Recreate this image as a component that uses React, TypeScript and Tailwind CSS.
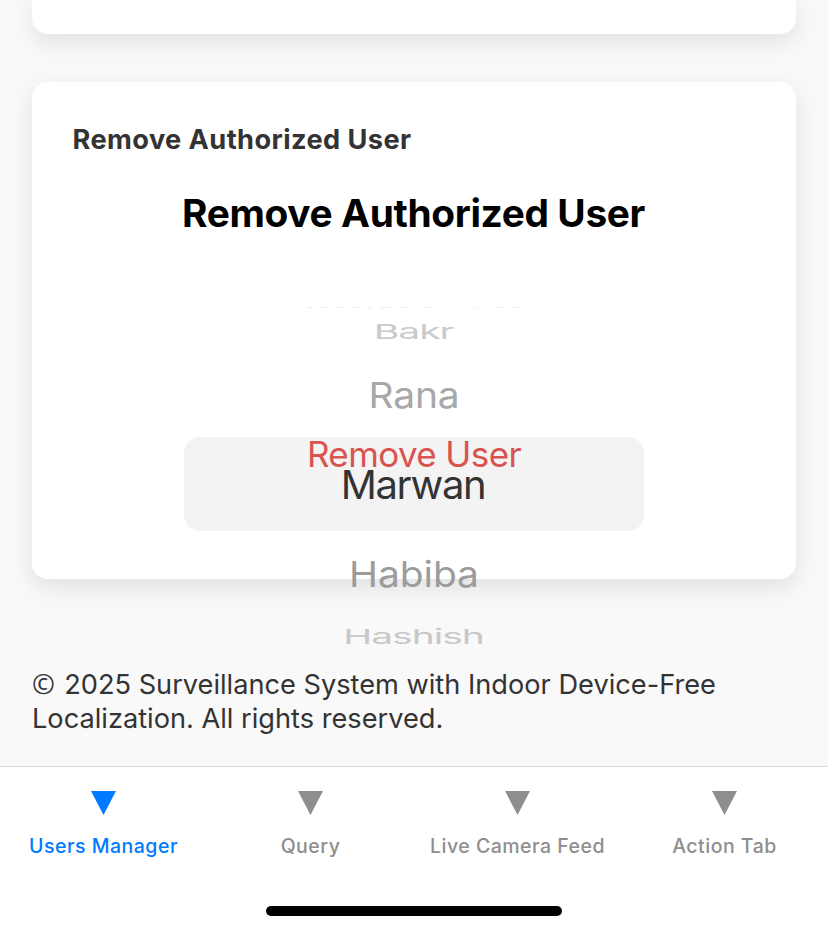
import React from "react";

type Row = { text: string; className: string };

const rows: Row[] = [
  { text: "Bakr", className: "top-[302px] text-[39px] text-[#cacaca] tracking-[-1px] scale-y-[0.53] pr-px" },
  { text: "Rana", className: "top-[365px] text-[39px] text-[#a8a8a8] tracking-[-0.2px] scale-y-[0.91]" },
  { text: "Marwan", className: "top-[455px] text-[40px] text-[#333] tracking-[-1.4px] pr-[2px]" },
  { text: "Habiba", className: "top-[544px] text-[39px] text-[#9c9c9c] tracking-[-0.1px] scale-y-[0.91]" },
  { text: "Hashish", className: "top-[607px] text-[39px] text-[#c8c8c8] tracking-[-1px] scale-y-[0.53] pr-px" },
];

const tabs = [
  { label: "Users Manager", active: true },
  { label: "Query", active: false },
  { label: "Live Camera Feed", active: false },
  { label: "Action Tab", active: false },
];

export default function App() {
  return (
    <div className="relative flex h-[932px] w-[828px] flex-col overflow-hidden bg-[#f9f9f9] font-['Inter',sans-serif]">
      <div className="mx-8 h-[34px] shrink-0 rounded-b-2xl bg-white shadow-[0_8px_24px_rgba(0,0,0,0.1)]" />
      <section className="mx-8 mt-12 h-[497px] shrink-0 rounded-2xl bg-white px-10 pt-[39px] shadow-[0_8px_24px_rgba(0,0,0,0.1)]">
        <h2 className="whitespace-nowrap pl-[0.5px] text-[27.2px] font-bold leading-[38px] tracking-[0.42px] text-[#333]">Remove Authorized User</h2>
        <h1 className="mt-[29px] whitespace-nowrap pr-px text-center text-[38.8px] font-bold leading-[50px] tracking-[-0.35px] text-black">Remove Authorized User</h1>
        <div className="mx-auto mt-[199px] h-[94px] w-[460px] rounded-2xl bg-[#f3f3f3]" />
      </section>
      {/* Sliver of the wheel row that has almost rotated out of view */}
      <svg className="absolute left-[300px] top-[306px]" width="228" height="3" viewBox="0 0 228 3" fill="none" stroke="#efefef" strokeWidth="1.2">
        <path d="M7 1.5h7M21 1.5h6M36 1.5h9M51 1.5h7M67 1.5h4M81 1.5h9M101 1.5h8M125 1.5h7M175 1.5h4M196 1.5h8M212 1.5h9" />
      </svg>
      {rows.map((r) => (
        <div key={r.text} className={`absolute left-0 w-full text-center leading-[60px] ${r.className}`}>{r.text}</div>
      ))}
      <div className="absolute left-0 top-[434px] w-full text-center text-[35px] leading-[40px] tracking-[-0.6px] text-[#d9534f]">Remove User</div>
      <footer className="mx-8 mt-[89px] h-[98px] text-[27.2px] leading-[34px] text-[#333]">
        <p className="whitespace-nowrap">
          <span className="inline-block w-[24.5px] font-['Open_Sans',sans-serif] text-[27.5px] leading-none">©</span> 2025 Surveillance System with Indoor Device-Free
        </p>
        <p>Localization. All rights reserved.</p>
      </footer>
      <nav className="grid h-[166px] grid-cols-4 border-t border-[#d8d8d8] bg-white">
        {tabs.map((t) => (
          <div key={t.label} className={`flex flex-col items-center pt-6 ${t.active ? "text-[#007aff]" : "text-[#8e8e8f]"}`}>
            <svg width="25" height="24" viewBox="0 0 25 24" fill="currentColor"><path d="M0 0H25L12.5 24Z" /></svg>
            <span className="mt-[19px] whitespace-nowrap text-[19.5px] font-medium leading-6 tracking-[0.5px]">{t.label}</span>
          </div>
        ))}
      </nav>
      <div className="absolute bottom-4 left-[266px] h-[10px] w-[296px] rounded-full bg-black" />
    </div>
  );
}
